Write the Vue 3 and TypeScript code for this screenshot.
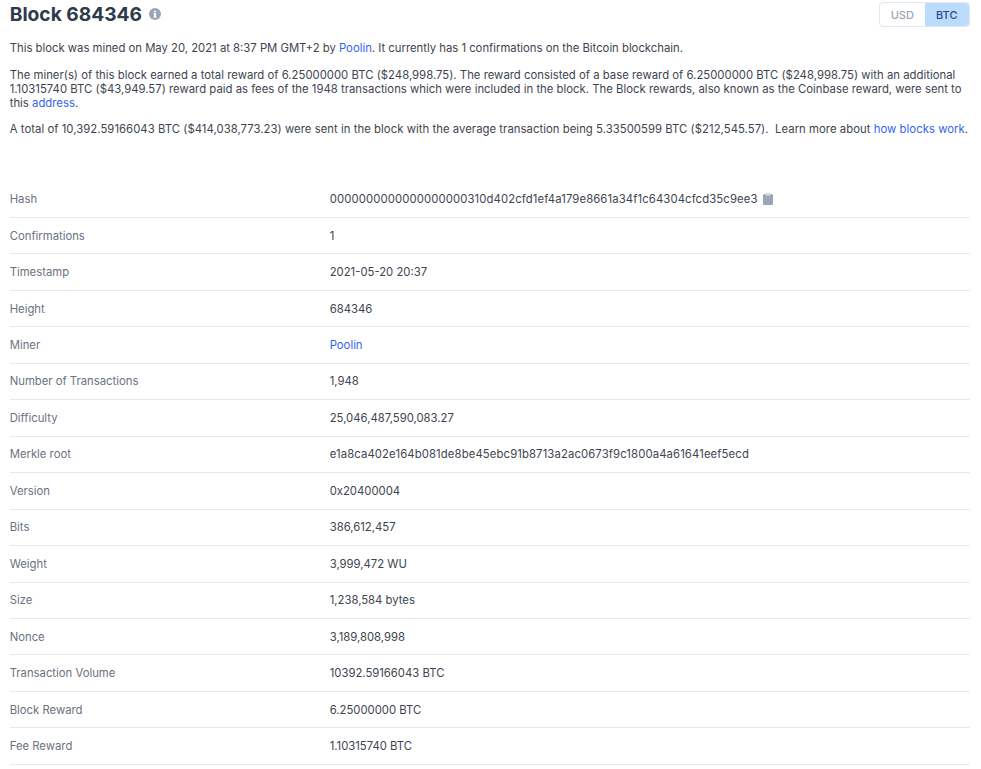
<script setup lang="ts">
interface Row { label: string; value: string; link?: boolean; copy?: boolean; hex?: boolean }
const rows: Row[] = [
  { label: 'Hash', value: '0000000000000000000310d402cfd1ef4a179e8661a34f1c64304cfcd35c9ee3', copy: true, hex: true },
  { label: 'Confirmations', value: '1' },
  { label: 'Timestamp', value: '2021-05-20 20:37' },
  { label: 'Height', value: '684346' },
  { label: 'Miner', value: 'Poolin', link: true },
  { label: 'Number of Transactions', value: '1,948' },
  { label: 'Difficulty', value: '25,046,487,590,083.27' },
  { label: 'Merkle root', value: 'e1a8ca402e164b081de8be45ebc91b8713a2ac0673f9c1800a4a61641eef5ecd', hex: true },
  { label: 'Version', value: '0x20400004' },
  { label: 'Bits', value: '386,612,457' },
  { label: 'Weight', value: '3,999,472 WU' },
  { label: 'Size', value: '1,238,584 bytes' },
  { label: 'Nonce', value: '3,189,808,998' },
  { label: 'Transaction Volume', value: '10392.59166043 BTC' },
  { label: 'Block Reward', value: '6.25000000 BTC' },
  { label: 'Fee Reward', value: '1.10315740 BTC' },
]
</script>

<template>
  <div class="page">
    <header class="head">
      <div class="title">
        <h1>Block 684346</h1>
        <svg class="info" viewBox="0 0 12 12" width="12" height="12">
          <circle cx="6" cy="6" r="6" fill="#9aa5b5" />
          <rect x="5" y="5" width="2" height="4.4" fill="#fff" />
          <rect x="4.4" y="5" width="1.4" height="0.9" fill="#fff" />
          <rect x="4.4" y="8.6" width="3.2" height="0.9" fill="#fff" />
          <circle cx="6" cy="3.4" r="1" fill="#fff" />
        </svg>
      </div>
      <div class="toggle">
        <span class="opt">USD</span>
        <span class="opt on">BTC</span>
      </div>
    </header>

    <p>This block was mined on May 20, 2021 at 8:37 PM GMT+2 by <a>Poolin</a>. It currently has 1 confirmations on the Bitcoin blockchain.</p>
    <p class="p2">The miner(s) of this block earned a total reward of 6.25000000 BTC ($248,998.75). The reward consisted of a base reward of 6.25000000 BTC ($248,998.75) with an additional 1.10315740 BTC ($43,949.57) reward paid as fees of the 1948 transactions which were included in the block. The Block rewards, also known as the Coinbase reward, were sent to this <a>address</a>.</p>
    <p class="p3">A total of 10,392.59166043 BTC ($414,038,773.23) were sent in the block with the average transaction being 5.33500599 BTC ($212,545.57).&nbsp; Learn more about <a>how blocks work</a>.</p>

    <div class="table">
      <div v-for="r in rows" :key="r.label" class="row">
        <div class="label">{{ r.label }}</div>
        <div class="value" :class="{ hex: r.hex }">
          <a v-if="r.link">{{ r.value }}</a>
          <template v-else>{{ r.value }}</template>
          <svg v-if="r.copy" class="clip" viewBox="0 0 10 12" width="10" height="12">
            <path d="M3.2 1.2V.6h3.6v.6H9a1 1 0 0 1 1 1V11a1 1 0 0 1-1 1H1a1 1 0 0 1-1-1V2.2a1 1 0 0 1 1-1z" fill="#9aa5b5" />
            <rect x="3" y="1" width="4" height="1.6" fill="#dfe3e9" />
          </svg>
        </div>
      </div>
    </div>
  </div>
</template>

<style scoped>
.page {
  padding: 0 11px 0 9.7px;
  box-sizing: border-box;
  width: 981px;
  font-family: Inter, "Liberation Sans", sans-serif;
  font-size: 11.3px;
  line-height: 14px;
  color: #3d4450;
}
.head {
  display: flex;
  justify-content: space-between;
  align-items: flex-start;
  padding-top: 1px;
  height: 41px;
  box-sizing: border-box;
}
.title {
  display: flex;
  align-items: center;
  gap: 7px;
}
h1 {
  margin: 0;
  font-size: 19.2px;
  line-height: 27px;
  font-weight: 700;
  color: #2f3a4a;
}
.info {
  display: block;
  margin-bottom: 2px;
}
.toggle {
  display: flex;
  height: 25px;
  width: 91px;
  margin-top: 1px;
  border: 1px solid #e3e6ec;
  border-radius: 4px;
  box-sizing: border-box;
  overflow: hidden;
}
.opt {
  flex: 1;
  display: flex;
  align-items: center;
  justify-content: center;
  font-size: 11px;
  font-weight: 500;
  color: #9aa5b5;
}
.opt.on {
  background: #bcdcfd;
  color: #2f4a8c;
}
p {
  margin: 0 0 13px;
}
.p2 {
  margin-bottom: 12px;
  letter-spacing: 0.02px;
}
.p3 {
  letter-spacing: 0.05px;
}
a {
  color: #3465ef;
}
.table {
  margin-top: 45.4px;
}
.row {
  display: flex;
  align-items: center;
  height: 36.47px;
  box-sizing: border-box;
  border-bottom: 1px solid #e6e7f0;
}
.label {
  width: 320px;
  color: #6b7280;
}
.value {
  display: flex;
  align-items: center;
  gap: 5px;
}
.hex {
  letter-spacing: 0.12px;
}
.clip {
  display: block;
}
</style>
